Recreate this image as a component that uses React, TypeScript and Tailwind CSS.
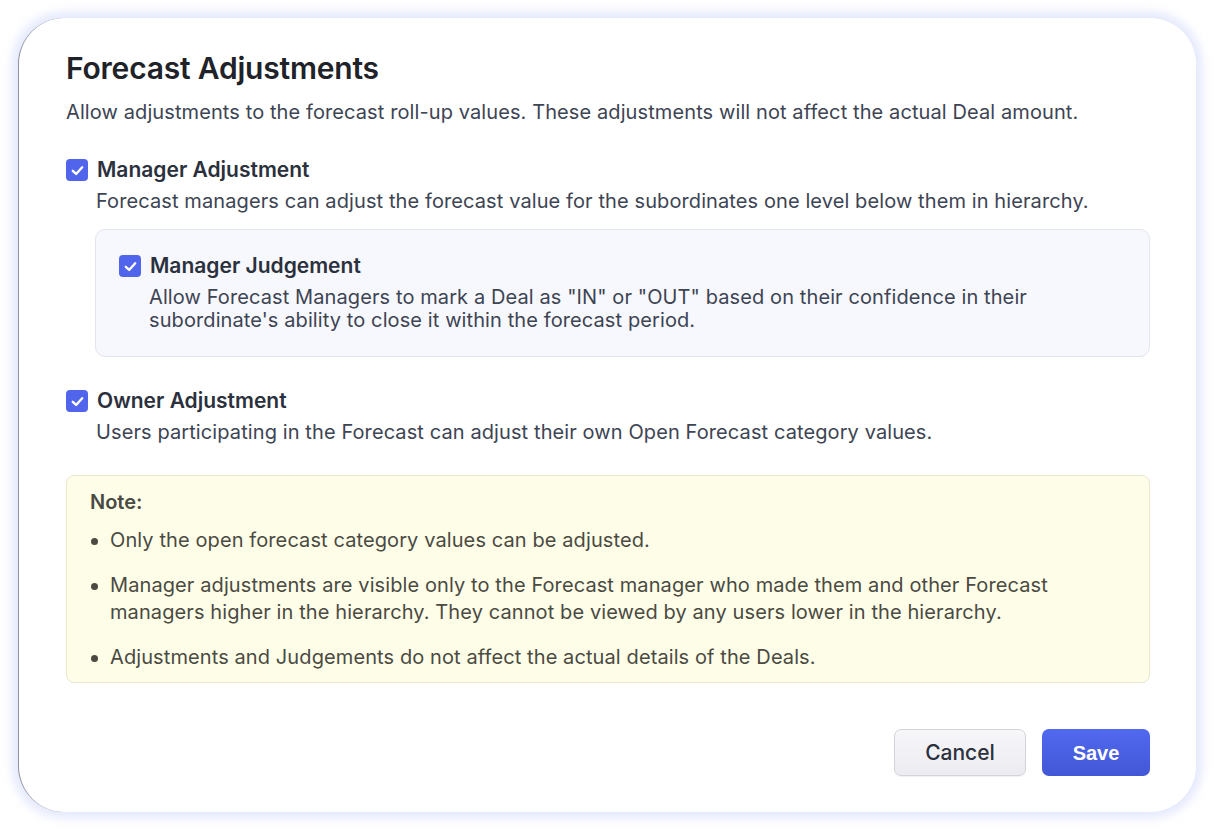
import React from "react";

function Check() {
  return (
    <span className="flex h-[22px] w-[22px] shrink-0 items-center justify-center rounded-[4px] bg-[#5164ec]">
      <svg width="15" height="15" viewBox="0 0 14 14" fill="none">
        <path d="M2.6 7.3 L5.7 10.2 L11.4 4" stroke="white" strokeWidth="2.2" strokeLinecap="round" strokeLinejoin="round" />
      </svg>
    </span>
  );
}

export default function App() {
  const font = { fontFamily: "Inter, 'Noto Sans', sans-serif" };
  return (
    <div className="h-[830px] w-[1214px] bg-white p-[18px]" style={font}>
      <div className="flex h-[794px] w-[1178px] flex-col rounded-[46px] border-l border-l-[#8d92a0] bg-white pb-[36px] pl-[47px] pr-[46px] pt-[32px] shadow-[0_0_10px_6px_rgba(205,215,250,0.55)]">
        <h1 className="text-[30px] font-semibold leading-[36px] tracking-[-0.2px] text-[#1f2329]">Forecast Adjustments</h1>
        <p className="mt-[12px] text-[20px] leading-[28px] tracking-[0.1px] text-[#3d4453]">
          Allow adjustments to the forecast roll-up values. These adjustments will not affect the actual Deal amount.
        </p>

        <div className="mt-[30px] flex items-center gap-[9px]">
          <Check />
          <span className="text-[21px] font-semibold leading-[28px] text-[#2b313c]">Manager Adjustment</span>
        </div>
        <p className="mt-[4px] pl-[30px] text-[20px] leading-[26px] tracking-[0.1px] text-[#3d4453]">
          Forecast managers can adjust the forecast value for the subordinates one level below them in hierarchy.
        </p>

        <div className="ml-[29px] mt-[15px] rounded-[10px] border border-[#e4e6ef] bg-[#f7f8fd] pb-[24px] pl-[23px] pr-[24px] pt-[22px]">
          <div className="flex items-center gap-[9px]">
            <Check />
            <span className="text-[21px] font-semibold leading-[28px] text-[#2b313c]">Manager Judgement</span>
          </div>
          <p className="mt-[6px] pl-[30px] text-[20px] leading-[23px] tracking-[0.1px] text-[#3d4453]">
            Allow Forecast Managers to mark a Deal as "IN" or "OUT" based on their confidence in their
            <br />
            subordinate's ability to close it within the forecast period.
          </p>
        </div>

        <div className="mt-[30px] flex items-center gap-[9px]">
          <Check />
          <span className="text-[21px] font-semibold leading-[28px] text-[#2b313c]">Owner Adjustment</span>
        </div>
        <p className="mt-[4px] pl-[30px] text-[20px] leading-[26px] tracking-[0.1px] text-[#3d4453]">
          Users participating in the Forecast can adjust their own Open Forecast category values.
        </p>

        <div className="mt-[30px] rounded-[8px] border border-[#ebe8cd] bg-[#fefee8] pb-[11px] pl-[23px] pr-[20px] pt-[13px] text-[#4a4a43]">
          <div className="text-[20px] font-semibold leading-[26px]">Note:</div>
          <ul className="mt-[12px] flex flex-col gap-[18px] text-[20px] leading-[27px] tracking-[0.1px]">
            <li className="flex">
              <span className="mr-[12px] ml-[1px] mt-[11px] h-[7px] w-[7px] shrink-0 rounded-full bg-[#4a4a43]" />
              <span>Only the open forecast category values can be adjusted.</span>
            </li>
            <li className="flex">
              <span className="mr-[12px] ml-[1px] mt-[11px] h-[7px] w-[7px] shrink-0 rounded-full bg-[#4a4a43]" />
              <span>
                Manager adjustments are visible only to the Forecast manager who made them and other Forecast
                <br />
                managers higher in the hierarchy. They cannot be viewed by any users lower in the hierarchy.
              </span>
            </li>
            <li className="flex">
              <span className="mr-[12px] ml-[1px] mt-[11px] h-[7px] w-[7px] shrink-0 rounded-full bg-[#4a4a43]" />
              <span>Adjustments and Judgements do not affect the actual details of the Deals.</span>
            </li>
          </ul>
        </div>

        <div className="mt-auto flex justify-end gap-[16px]">
          <button className="h-[47px] w-[132px] rounded-[7px] border border-[#d3d4db] bg-gradient-to-b from-[#f7f7fa] to-[#ebebf1] text-[21px] font-medium text-[#2b313c] shadow-[0_1px_1px_rgba(0,0,0,0.06)]">
            Cancel
          </button>
          <button
            className="h-[47px] w-[108px] rounded-[7px] bg-gradient-to-b from-[#5169f0] to-[#4257d6] text-[20px] font-bold text-white"
            style={{ fontFamily: "'Liberation Sans', Arial, sans-serif" }}
          >
            Save
          </button>
        </div>
      </div>
    </div>
  );
}
